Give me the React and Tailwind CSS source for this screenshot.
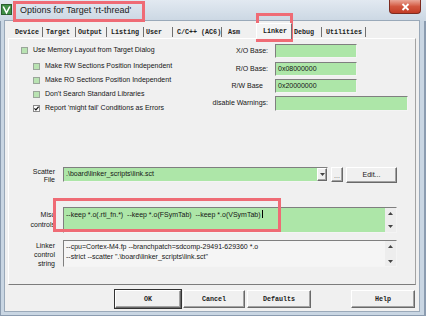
import React from "react";

const SANS = "font-['Liberation_Sans','Arial',sans-serif]";
const MONO = "font-['Liberation_Mono','Courier_New',monospace]";

const SUNKEN =
  "border border-t-[#7f7f7f] border-l-[#7f7f7f] border-r-[#f4f4f4] border-b-[#f4f4f4]";
const RAISED =
  "border border-t-white border-l-white border-r-[#696969] border-b-[#696969] bg-[#f0f0f0] shadow-[inset_-1px_-1px_0_#a3a3a3]";

function Check({ checked, indent, children }) {
  return (
    <div
      className={
        indent
          ? "flex items-center h-[14px] pl-[12px]"
          : "flex items-center h-[12px]"
      }
    >
      {checked ? (
        <span className="w-[7px] h-[7px] border border-[#8a8a8a] bg-white flex items-center justify-center shrink-0">
          <svg width="5" height="5" viewBox="0 0 5 5">
            <path d="M0.4 2.4 L1.9 3.9 L4.6 0.7" stroke="#111" strokeWidth="1.2" fill="none" />
          </svg>
        </span>
      ) : (
        <span className="w-[7px] h-[7px] border border-[#9aa69a] bg-[#b9e3b2] shrink-0" />
      )}
      <span className="ml-[5px] whitespace-nowrap">{children}</span>
    </div>
  );
}

function UpArrow() {
  return (
    <svg width="5" height="3" viewBox="0 0 5 3">
      <path d="M0 3 L2.5 0 L5 3 Z" fill="#444" />
    </svg>
  );
}
function DownArrow() {
  return (
    <svg width="5" height="3" viewBox="0 0 5 3">
      <path d="M0 0 L2.5 3 L5 0 Z" fill="#444" />
    </svg>
  );
}

const TABS = [
  ["Device", "w-[31px] pl-[3px] border-r"],
  ["Target", "w-[33px] pl-[3px] border-r"],
  ["Output", "w-[31px] pl-[2px] border-r"],
  ["Listing", "w-[37px] pl-[4px] border-r"],
  ["User", "w-[29px] pl-[2px] border-r"],
  ["C/C++ (AC6)", "w-[49px] pl-[4px] border-r"],
  ["Asm", "w-[34px] pl-[6px]"],
];
const TABS2 = [
  ["Debug", "w-[30px] pl-[2px] border-r"],
  ["Utilities", "w-[44px] pl-[4px] border-r"],
];

export default function App() {
  return (
    <div
      className={`relative w-[426px] h-[316px] bg-[#c9d6e3] flex flex-col overflow-hidden text-[#151515] text-[7px] ${SANS} shadow-[inset_1px_0_0_#8b9cb0,inset_-2px_0_0_#8b9cb0,inset_0_-1px_0_#8b9cb0]`}
    >
      {/* Title bar */}
      <div className="h-[21px] shrink-0 flex items-center bg-linear-to-b from-[#e2e9f1] to-[#cbd7e3]">
        <svg className="ml-[1px] self-start mt-[4px]" width="11" height="11" viewBox="0 0 11 11">
          <rect x="0" y="0" width="11" height="11" fill="#3f8f45" />
          <rect x="0.5" y="0.5" width="10" height="10" fill="none" stroke="#2a5e2e" />
          <path d="M2.2 2.5 L5.5 8.8 L8.8 2.5" stroke="#ffffff" strokeWidth="1.6" fill="none" />
        </svg>
        <span className="ml-[8px] text-[9px] leading-none text-[#1b1b1b] whitespace-nowrap">
          Options for Target 'rt-thread'
        </span>
        <div className="ml-auto mr-[5px] self-start w-[32px] h-[14px] rounded-b-[4px] bg-linear-to-b from-[#e9a698] via-[#d2563f] to-[#c23c25] border border-t-0 border-[#7d2b1f] flex items-center justify-center">
          <svg width="9" height="8" viewBox="0 0 9 8">
            <path d="M1.5 1 L7.5 7 M7.5 1 L1.5 7" stroke="#ffffff" strokeWidth="1.8" />
          </svg>
        </div>
      </div>

      {/* Client area */}
      <div className="ml-[5px] mr-[7px] h-[290px] bg-[#f0f0f0] flex flex-col ring-1 ring-[#9aa9b9]">
        {/* Tabs */}
        <div className={`h-[17px] shrink-0 flex items-end pl-[7px] ${MONO} text-[6.7px] font-bold text-[#222]`}>
          {TABS.map(([t, c]) => (
            <div key={t} className={`h-[10px] mb-[1px] flex items-center whitespace-nowrap border-[#707070] ${c}`}>
              {t}
            </div>
          ))}
          <div className="relative z-10 w-[36px] h-[16px] -mb-[1px] pl-[6px] flex items-center whitespace-nowrap bg-[#f4f4f4] border-t border-l border-r border-t-white border-l-white border-r-[#707070]">
            Linker
          </div>
          {TABS2.map(([t, c]) => (
            <div key={t} className={`h-[10px] mb-[1px] flex items-center whitespace-nowrap border-[#707070] ${c}`}>
              {t}
            </div>
          ))}
        </div>

        {/* Panel */}
        <div className="ml-[3px] w-[408px] h-[247px] shrink-0 border border-t-white border-l-white border-r-[#a3a3a3] border-b-[#7c7c7c] flex flex-col">
          {/* Top section */}
          <div className="h-[128px] shrink-0 flex pt-[5px]">
            <div className="w-[197px] shrink-0 pl-[12px] flex flex-col">
              <Check>Use Memory Layout from Target Dialog</Check>
              <div className="mt-[3px]" />
              <Check indent>Make RW Sections Position Independent</Check>
              <Check indent>Make RO Sections Position Independent</Check>
              <Check indent>Don't Search Standard Libraries</Check>
              <Check indent checked>Report 'might fail' Conditions as Errors</Check>
            </div>
            <div className="flex flex-col">
              <div className="flex items-center h-[14px]">
                <span className="w-[62px] text-right whitespace-nowrap">X/O Base:</span>
                <div className={`ml-[7px] w-[82px] h-[14px] bg-[#ade6a8] ${SUNKEN}`} />
              </div>
              <div className="flex items-center h-[14px] mt-[4px]">
                <span className="w-[62px] text-right whitespace-nowrap">R/O Base:</span>
                <div className={`ml-[7px] w-[82px] h-[14px] bg-[#ade6a8] pl-[2px] flex items-center ${SUNKEN}`}>
                  0x08000000
                </div>
              </div>
              <div className="flex items-center h-[14px] mt-[3px]">
                <span className="w-[62px] text-right pr-[5px] whitespace-nowrap">R/W Base</span>
                <div className={`ml-[7px] w-[82px] h-[14px] bg-[#ade6a8] pl-[2px] flex items-center ${SUNKEN}`}>
                  0x20000000
                </div>
              </div>
              <div className="flex items-center h-[15px] mt-[3px]">
                <span className="w-[62px] text-right whitespace-nowrap">disable Warnings:</span>
                <div className={`ml-[7px] w-[133px] h-[15px] bg-[#ade6a8] ${SUNKEN}`} />
              </div>
            </div>
          </div>

          {/* Scatter file row */}
          <div className="flex h-[15px] shrink-0">
            <div className="w-[46px] shrink-0 text-right leading-[8px] mt-[1px]">
              Scatter
              <br />
              File
            </div>
            <div className={`ml-[8px] w-[265px] h-[15px] bg-[#ade6a8] flex items-center ${SUNKEN}`}>
              <span className="pl-[2px] flex-1 whitespace-nowrap">.\board\linker_scripts\link.sct</span>
              <div className={`w-[10px] h-[13px] flex items-center justify-center ${RAISED}`}>
                <DownArrow />
              </div>
            </div>
            <div className={`ml-[3px] w-[12px] h-[15px] flex items-end justify-center pb-[2px] leading-none text-[#666] ${RAISED}`}>
              ...
            </div>
            <div className={`ml-[3px] w-[51px] h-[16px] flex items-center justify-center ${RAISED}`}>
              Edit...
            </div>
          </div>

          {/* Misc controls row */}
          <div className="flex h-[26px] mt-[25px] shrink-0">
            <div className="w-[46px] shrink-0 text-right leading-[10px] mt-[3px]">
              Misc
              <br />
              controls
            </div>
            <div className={`ml-[8px] w-[334px] h-[26px] bg-[#ade6a8] flex ${SUNKEN}`}>
              <div className="flex-1 pl-[2px] pt-[2px] leading-[9px] whitespace-pre flex items-start">
                <span>--keep *.o(.rti_fn.*)  --keep *.o(FSymTab)  --keep *.o(VSymTab)</span>
                <span className="w-[1px] h-[8px] bg-black ml-[1px]" />
              </div>
              <div className="w-[11px] h-full bg-[#ededed] flex flex-col items-center justify-between py-[4px]">
                <UpArrow />
                <DownArrow />
              </div>
            </div>
          </div>

          {/* Linker control string row */}
          <div className="flex h-[27px] mt-[7px] shrink-0">
            <div className="w-[46px] shrink-0 text-right leading-[9px] mt-[1px]">
              Linker
              <br />
              control
              <br />
              string
            </div>
            <div className={`ml-[8px] w-[334px] h-[27px] bg-[#f5f5f5] flex ${SUNKEN}`}>
              <div className="flex-1 pl-[2px] pt-[1px] leading-[10px] whitespace-pre">
                {"--cpu=Cortex-M4.fp --branchpatch=sdcomp-29491-629360 *.o"}
                <br />
                {'--strict --scatter ".\\board\\linker_scripts\\link.sct"'}
              </div>
              <div className="w-[11px] h-full bg-[#ededed] flex flex-col items-center justify-between pt-[4px] pb-[3px]">
                <UpArrow />
                <DownArrow />
              </div>
            </div>
          </div>
        </div>

        {/* Buttons */}
        <div className={`flex pt-[5px] pl-[110px] ${MONO} text-[6.7px] font-bold text-[#222]`}>
          <div className={`w-[66px] h-[18px] flex items-center justify-center outline outline-1 outline-[#333] ${RAISED}`}>OK</div>
          <div className={`ml-[2px] w-[62px] h-[18px] flex items-center justify-center ${RAISED}`}>Cancel</div>
          <div className={`ml-[2px] w-[64px] h-[18px] flex items-center justify-center ${RAISED}`}>Defaults</div>
          <div className={`ml-[40px] w-[64px] h-[18px] flex items-center justify-center ${RAISED}`}>Help</div>
        </div>
      </div>

      {/* Red highlight overlays */}
      <div className="absolute left-[13px] top-[1px] w-[132px] h-[21px] border-[3px] border-[#ef6b75] pointer-events-none" />
      <div className="absolute left-[256px] top-[13px] w-[37px] h-[29px] border-[3px] border-[#ef6b75] pointer-events-none" />
      <div className="absolute left-[53px] top-[198px] w-[228px] h-[34px] border-[3px] border-[#ef6b75] pointer-events-none" />
    </div>
  );
}
